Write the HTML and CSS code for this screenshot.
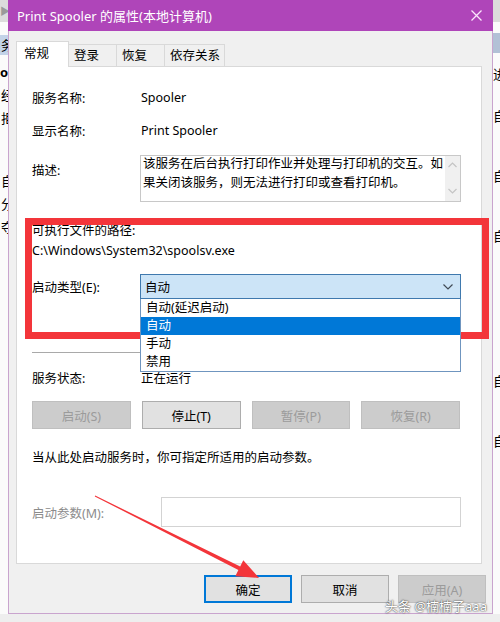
FILE: index.html
```html
<!DOCTYPE html>
<html lang="zh-CN">
<head>
  <meta charset="UTF-8">
  <title>Print Spooler 的属性(本地计算机)</title>
  <link rel="stylesheet" href="styles.css">
</head>
<body>
  <!-- 后面的窗口（只露出边缘） -->
  <div class="behind behind-left">
    <div class="behind-head">▶</div>
    <div class="behind-sel">务</div>
    <div class="behind-line bold">oo</div>
    <div class="behind-line">经</div>
    <div class="behind-line">拒</div>
    <div class="behind-gap"></div>
    <div class="behind-line">自</div>
    <div class="behind-line">分</div>
    <div class="behind-line">夺</div>
  </div>
  <div class="behind behind-right">
    <div class="behind-head"></div>
    <div class="behind-sel"></div>
    <div class="behind-line" style="margin-top:14px">进</div>
    <div class="behind-line" style="margin-top:27px">自</div>
    <div class="behind-line" style="margin-top:45px">自</div>
    <div class="behind-line" style="margin-top:45px">自</div>
    <div class="behind-line" style="margin-top:130px">自</div>
    <div class="behind-line" style="margin-top:45px">自</div>
  </div>

  <div class="dialog">
    <div class="titlebar">
      <span class="title">Print Spooler 的属性(本地计算机)</span>
      <svg class="close" width="11" height="11" viewBox="0 0 11 11">
        <path d="M0.5 0.5 L10.5 10.5 M10.5 0.5 L0.5 10.5" stroke="#fbe6fc" stroke-width="1.3"/>
      </svg>
    </div>

    <div class="dialog-body">
      <div class="tabs">
        <div class="tab active">常规</div>
        <div class="tab">登录</div>
        <div class="tab">恢复</div>
        <div class="tab last">依存关系</div>
      </div>

      <div class="panel">
        <div class="row">
          <span class="label">服务名称:</span>
          <span>Spooler</span>
        </div>
        <div class="row row-name">
          <span class="label">显示名称:</span>
          <span>Print Spooler</span>
        </div>
        <div class="row row-desc">
          <span class="label">描述:</span>
          <div class="desc-box">
            <p class="desc-text">该服务在后台执行打印作业并处理与打印机的交互。如<br>果关闭该服务，则无法进行打印或查看打印机。</p>
            <div class="desc-scroll">
              <svg width="9" height="6" viewBox="0 0 9 6"><path d="M0.5 5 L4.5 1 L8.5 5" fill="none" stroke="#c4c4c4" stroke-width="1.2"/></svg>
              <svg width="9" height="6" viewBox="0 0 9 6"><path d="M0.5 1 L4.5 5 L8.5 1" fill="none" stroke="#c4c4c4" stroke-width="1.2"/></svg>
            </div>
          </div>
        </div>
        <div class="row row-path-label">可执行文件的路径:</div>
        <div class="row row-path">C:\Windows\System32\spoolsv.exe</div>
        <div class="row row-start">
          <span class="label">启动类型(E):</span>
          <div class="combo">
            <span>自动</span>
            <svg width="10" height="6" viewBox="0 0 10 6"><path d="M0.5 0.5 L5 5 L9.5 0.5" fill="none" stroke="#404a55" stroke-width="1.2"/></svg>
            <ul class="combo-list">
              <li>自动(延迟启动)</li>
              <li class="selected">自动</li>
              <li>手动</li>
              <li>禁用</li>
            </ul>
          </div>
        </div>

        <div class="rule"></div>

        <div class="row row-status">
          <span class="label">服务状态:</span>
          <span>正在运行</span>
        </div>
        <div class="service-buttons">
          <button class="btn" disabled>启动(S)</button>
          <button class="btn">停止(T)</button>
          <button class="btn" disabled>暂停(P)</button>
          <button class="btn" disabled>恢复(R)</button>
        </div>
        <div class="row row-note">当从此处启动服务时，你可指定所适用的启动参数。</div>
        <div class="row row-param">
          <span class="label label-off">启动参数(M):</span>
          <div class="param-input"></div>
        </div>
      </div>

      <div class="footer">
        <button class="btn btn-wide btn-default">确定</button>
        <button class="btn btn-wide">取消</button>
        <button class="btn btn-wide" disabled>应用(A)</button>
      </div>
    </div>
  </div>

  <!-- 标注：红框和箭头 -->
  <div class="highlight"></div>
  <svg class="arrow" width="500" height="622" viewBox="0 0 500 622">
    <polygon points="95.2,495.6 240.2,566.4 243.3,560.2 259,578 235.3,576.2 238.4,570 94.8,496.4" fill="#f3353a"/>
  </svg>

  <div class="watermark">头条 @楠楠子aaa</div>
</body>
</html>
```

FILE: styles.css
```css
* {
    box-sizing: border-box;
}
body {
    margin: 0;
    width: 500px;
    height: 622px;
    overflow: hidden;
    position: relative;
    background: #eeeeee;
    font-family: "Noto Sans", "Noto Sans CJK SC", sans-serif;
    font-size: 12.5px;
    color: #000;
}

/* 后面的窗口 */
.behind {
    position: absolute;
    top: 0;
    height: 614px;
    overflow: hidden;
    background: #fbfbfb;
    font-size: 13px;
    line-height: 15px;
    white-space: nowrap;
}
.behind-left {
    left: 0;
    width: 8px;
    text-align: right;
}
.behind-right {
    left: 492px;
    width: 8px;
    border-left: 1px solid #8a8a8a;
}
.behind-head {
    height: 22px;
    background: #dcdcdc;
    color: #9a9a9a;
    font-size: 10px;
    line-height: 22px;
}
.behind-left .behind-head {
    margin-right: -2px;
}
.behind-sel {
    height: 20px;
    margin-top: 13px;
    background: #c3d3e8;
    line-height: 20px;
    margin-right: -6px;
}
.behind-right .behind-sel {
    margin-top: 11px;
    margin-right: 0;
    background: #b2c1d6;
}
.behind-left .behind-line {
    margin-top: 8px;
    margin-right: -6px;
}
.behind-gap {
    height: 40px;
}
.bold {
    font-weight: bold;
    margin-top: 10px !important;
}

/* 对话框 */
.dialog {
    position: absolute;
    left: 8px;
    top: 0;
    width: 485px;
    height: 614px;
    background: #f0f0f0;
    border: 1px solid #c9a4ce;
    border-top: none;
    display: flex;
    flex-direction: column;
}
.titlebar {
    height: 31px;
    margin: 0 -1px;
    padding: 0 11px 0 9px;
    background: #af45b9;
    color: #fff;
    font-size: 13px;
    display: flex;
    align-items: center;
    justify-content: space-between;
}
.dialog-body {
    padding: 10px 10px 0 7px;
}

.tabs {
    display: flex;
    align-items: flex-end;
    height: 25px;
    position: relative;
    z-index: 1;
}
.tab {
    height: 22px;
    line-height: 21px;
    padding: 0 17px 0 5px;
    border: 1px solid #d9d9d9;
    border-left: none;
    border-bottom: none;
    background: #f0f0f0;
}
.tab.active {
    height: 26px;
    margin-bottom: -1px;
    padding: 0 19px 0 7px;
    border-left: 1px solid #d9d9d9;
    background: #fff;
    line-height: 23px;
}
.tab.last {
    padding-right: 4px;
}

.panel {
    height: 498px;
    padding: 20px 15px 0 15px;
    background: #fff;
    border: 1px solid #d9d9d9;
}
.row {
    display: flex;
    align-items: center;
    height: 20px;
}
.label {
    width: 109px;
    flex-shrink: 0;
}
.row-name {
    margin-top: 13px;
}
.row-desc {
    margin-top: 15px;
    height: 47px;
    align-items: flex-start;
}
.row-desc .label {
    margin-top: 6px;
    line-height: 20px;
}
.desc-box {
    width: 321px;
    height: 47px;
    margin-left: -1px;
    border: 1px solid #c8c8c8;
    display: flex;
}
.desc-text {
    flex: 1;
    margin: -2px 0 0;
    padding-left: 2px;
    line-height: 19px;
    white-space: nowrap;
}
.desc-scroll {
    width: 15px;
    background: #f0f0f0;
    display: flex;
    flex-direction: column;
    align-items: center;
    justify-content: space-between;
    padding: 6px 0 7px;
}
.row-path-label {
    margin-top: 17px;
}
.row-path {
    margin-top: 1px;
}
.row-start {
    margin-top: 14px;
    height: 25px;
}
.combo {
    position: relative;
    width: 321px;
    height: 25px;
    margin-left: -1px;
    padding: 0 7px 0 4px;
    border: 1px solid #3f79ae;
    background: #cce4f7;
    display: flex;
    align-items: center;
    justify-content: space-between;
}
.combo-list {
    position: absolute;
    top: 24px;
    left: -1px;
    right: -1px;
    margin: 0;
    padding: 0;
    list-style: none;
    background: #fff;
    border: 1px solid #6f95bf;
    border-top: none;
    z-index: 2;
}
.combo-list li {
    height: 18px;
    line-height: 18px;
    padding-left: 5px;
}
.combo-list .selected {
    background: #0078d7;
    color: #fff;
}

.rule {
    margin-top: 53px;
    width: 429px;
    height: 1px;
    background: #a9a9a9;
}
.row-status {
    margin-top: 14px;
}

.btn {
    height: 28px;
    padding: 0;
    border: 1px solid #adadad;
    background: #e1e1e1;
    font: inherit;
    color: #000;
}
.btn:disabled {
    background: #cccccc;
    border-color: #bfbfbf;
    color: #9b9b9b;
}
.service-buttons {
    margin-top: 14px;
    width: 428px;
    display: grid;
    grid-template-columns: repeat(4, 1fr);
    gap: 11px;
}
.row-note {
    margin-top: 17px;
}
.row-param {
    margin-top: 31px;
    height: 30px;
}
.label-off {
    width: 129px;
    color: #8c8c8c;
}
.param-input {
    width: 300px;
    height: 30px;
    border: 1px solid #d3d3d3;
    background: #fff;
}

.footer {
    display: flex;
    justify-content: flex-end;
    gap: 9px;
    margin-top: 11px;
    margin-right: -4px;
}
.btn-wide {
    width: 88px;
}
.btn-default {
    border-color: #0078d7;
    box-shadow: inset 0 0 0 1px #0078d7;
}

/* 标注 */
.highlight {
    position: absolute;
    left: 25px;
    top: 218px;
    width: 464px;
    height: 121px;
    border: 7px solid #f3353a;
}
.arrow {
    position: absolute;
    left: 0;
    top: 0;
    pointer-events: none;
}
.watermark {
    position: absolute;
    left: 385px;
    top: 596px;
    color: #fff;
    font-size: 13px;
    line-height: 20px;
    text-shadow: 0 0 2px rgba(0, 0, 0, 0.7), 0 0 1px rgba(0, 0, 0, 0.6);
}
```
